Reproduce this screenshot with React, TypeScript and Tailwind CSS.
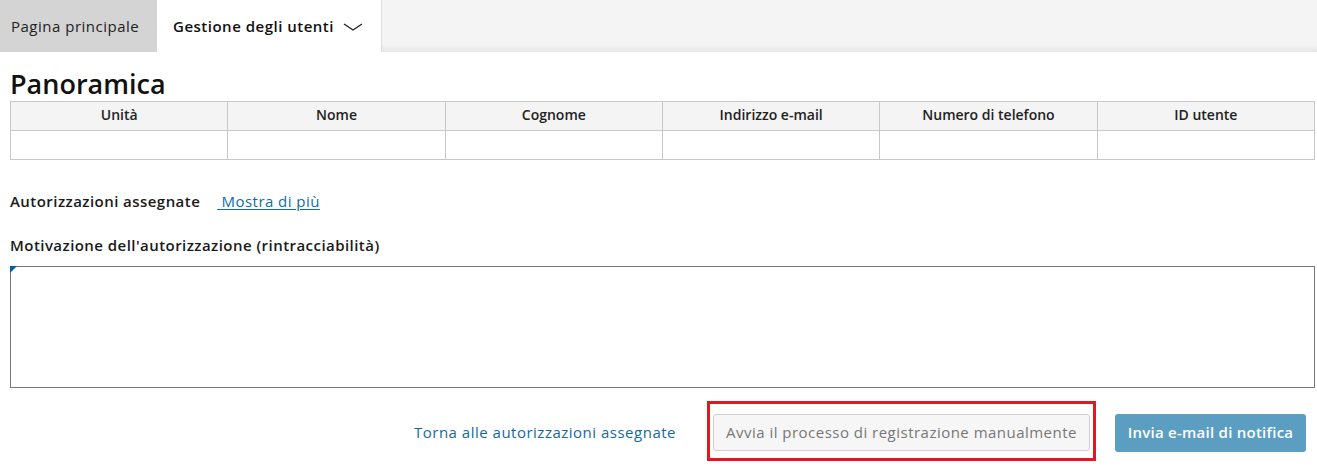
const columns = ["Unità", "Nome", "Cognome", "Indirizzo e-mail", "Numero di telefono", "ID utente"];

export default function App() {
  return (
    <div className="min-h-[472px] bg-white font-['Open_Sans',sans-serif] text-[#1a1a1a]">
      {/* top navigation */}
      <nav className="flex h-[52px] bg-gradient-to-b from-[#f4f4f4] from-85% to-[#e6e6e6]">
        <div className="flex w-[157px] items-center bg-[#d4d4d4] pl-[11px] text-[15px] tracking-[0.5px] text-[#222]">
          Pagina principale
        </div>
        <div className="flex w-[225px] items-center gap-[9px] border-r border-[#dcdcdc] bg-white pl-[16px] text-[15px] font-semibold tracking-[0.5px] text-[#111]">
          Gestione degli utenti
          <svg width="20" height="10" viewBox="0 0 20 10" className="mt-[2px]">
            <polyline points="1,2 10,8 19,2" fill="none" stroke="#222" strokeWidth="1.4" />
          </svg>
        </div>
      </nav>

      <main className="pl-[10px] pr-[2px]">
        <h1 className="mt-[15px] text-[27px] font-semibold leading-[34px] text-[#111]">Panoramica</h1>

        <table className="w-full table-fixed border-collapse text-[14px]">
          <thead>
            <tr className="bg-[#f4f4f4]">
              {columns.map((c) => (
                <th key={c} className="h-[29px] border border-[#c8c8c8] pb-[3px] font-semibold text-[#222]">
                  {c}
                </th>
              ))}
            </tr>
          </thead>
          <tbody>
            <tr>
              {columns.map((c) => (
                <td key={c} className="h-[29px] border border-[#c8c8c8]" />
              ))}
            </tr>
          </tbody>
        </table>

        <div className="mt-[30px] flex items-center text-[15px] tracking-[0.45px]">
          <span className="font-semibold">Autorizzazioni assegnate</span>
          <a href="#" className="ml-[17px] text-[#0b6fa4] underline underline-offset-2">
            &nbsp;Mostra di più
          </a>
        </div>

        <div className="mt-[21px] text-[15px] font-semibold tracking-[0.45px]">
          Motivazione dell'autorizzazione (rintracciabilità)
        </div>

        <div className="relative mt-[10px]">
          <textarea className="block h-[122px] w-full resize-none border border-[#767676] outline-none" />
          <div className="absolute left-0 top-0 h-0 w-0 border-r-[7px] border-t-[7px] border-r-transparent border-t-[#005f9e]" />
        </div>

        <div className="mt-[13px] flex items-center justify-end pr-[9px]">
          <a href="#" className="mr-[31px] mt-[3px] text-[15px] tracking-[0.5px] text-[#1569a0]">
            Torna alle autorizzazioni assegnate
          </a>
          <div className="border-[3px] border-[#e4161f] px-[3px] pb-[7px] pt-[10px]">
            <button className="h-[37px] w-[377px] rounded-[3px] border border-[#cfcfcf] bg-[#f6f6f6] text-[15px] tracking-[0.48px] text-[#777]">
              Avvia il processo di registrazione manualmente
            </button>
          </div>
          <button className="ml-[19px] mt-[3px] h-[38px] w-[191px] rounded-[3px] bg-[#5b9ec2] text-[15px] font-semibold tracking-[0.25px] text-white">
            Invia e-mail di notifica
          </button>
        </div>
      </main>
    </div>
  );
}
